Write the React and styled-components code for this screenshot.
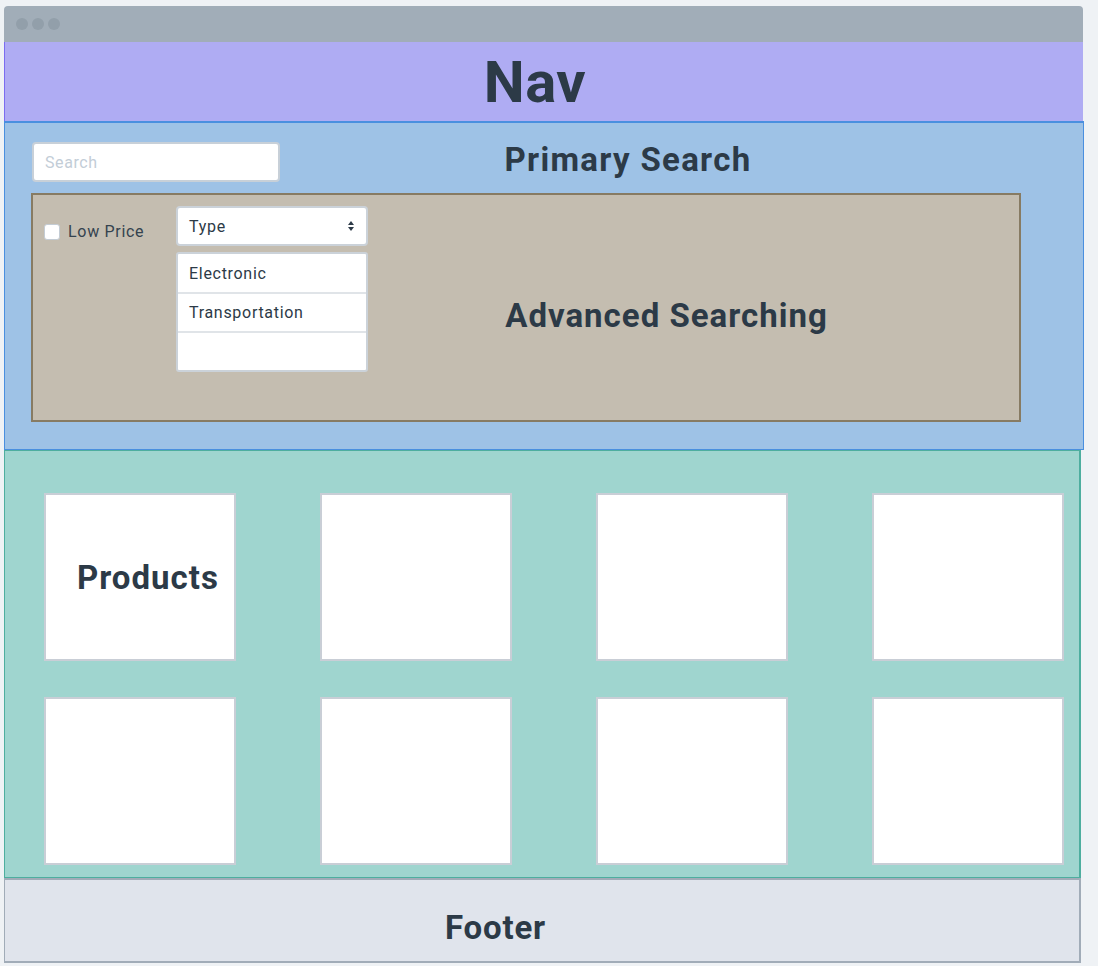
import React from "react";
import styled, { createGlobalStyle } from "styled-components";

const GlobalStyle = createGlobalStyle`
  html, body { margin: 0; padding: 0; }
  body {
    background: #eff2f5;
    font-family: Roboto, "Liberation Sans", sans-serif;
    color: #2c3a47;
  }
`;

const Window = styled.div`
  margin: 6px 0 0 4px;
  width: 1080px;
  display: flex;
  flex-direction: column;
`;

const TitleBar = styled.div`
  width: 1079px;
  height: 36px;
  background: #a1adb8;
  border-radius: 4px 4px 0 0;
  display: flex;
  align-items: center;
  gap: 4px;
  padding-left: 12px;
  box-sizing: border-box;
`;

const Dot = styled.span`
  width: 12px;
  height: 12px;
  border-radius: 50%;
  background: #929faa;
`;

const Heading = styled.h1`
  margin: 0;
  font-weight: 700;
  font-size: ${(p) => p.$size || 33}px;
  line-height: 1;
  color: #2c3a47;
  letter-spacing: ${(p) => (p.$ls !== undefined ? p.$ls : 1)}px;
`;

const Nav = styled.header`
  width: 1079px;
  height: 79px;
  box-sizing: border-box;
  background: #afacf3;
  border-left: 1px solid #7a6df0;
  display: flex;
  align-items: center;
  justify-content: center;
  padding: 0 18px 0 0;
`;

const SearchSection = styled.section`
  width: 1080px;
  height: 329px;
  box-sizing: border-box;
  background: #9ec2e6;
  border: 1px solid #4a8fdf;
  border-top-width: 2px;
  padding: 19px 0 0 27px;
  display: flex;
  flex-direction: column;
  gap: 11px;
`;

const TopRow = styled.div`
  display: grid;
  grid-template-columns: 248px 696px;
  align-items: center;
`;

const SearchInput = styled.input`
  height: 40px;
  box-sizing: border-box;
  border: 2px solid #c8d0d8;
  border-radius: 4px;
  background: #fff;
  padding: 0 11px;
  font-family: inherit;
  font-size: 16px;
  letter-spacing: 0.6px;
  outline: none;
  &::placeholder { color: #c3cdd7; }
`;

const CenteredTitle = styled.div`
  display: flex;
  justify-content: center;
  margin-top: -6px;
`;

const Advanced = styled.div`
  width: 990px;
  height: 229px;
  box-sizing: border-box;
  margin-left: -1px;
  background: #c4bdb0;
  border: 2px solid #877b63;
  padding: 11px 0 0 11px;
  display: flex;
  align-items: flex-start;
`;

const CheckLabel = styled.label`
  display: flex;
  align-items: center;
  gap: 8px;
  margin-top: 16px;
  font-size: 16px;
  letter-spacing: 0.7px;
  color: #34434f;
  width: 132px;
`;

const Box = styled.span`
  width: 16px;
  height: 16px;
  box-sizing: border-box;
  background: #fff;
  border: 1px solid #c4ccd4;
  border-radius: 3px;
`;

const SelectCol = styled.div`
  width: 192px;
  display: flex;
  flex-direction: column;
  gap: 6px;
`;

const Select = styled.div`
  height: 40px;
  box-sizing: border-box;
  background: #fff;
  border: 2px solid #cbd2d9;
  border-radius: 4px;
  display: flex;
  align-items: center;
  justify-content: space-between;
  padding: 0 11px;
  font-size: 16px;
  letter-spacing: 0.7px;
  color: #2c3a47;
`;

const List = styled.ul`
  margin: 0;
  padding: 0;
  list-style: none;
  background: #fff;
  border: 2px solid #cbd2d9;
  border-radius: 3px;
`;

const Option = styled.li`
  height: ${(p) => (p.$first ? 38 : 39)}px;
  box-sizing: border-box;
  display: flex;
  align-items: center;
  padding-left: 11px;
  font-size: 16px;
  letter-spacing: 0.7px;
  color: #2c3a47;
  border-top: ${(p) => (p.$first ? "none" : "2px solid #e0e4e8")};
`;

const AdvTitle = styled.div`
  flex: 1;
  display: flex;
  align-items: center;
  justify-content: center;
  padding: 4px 54px 0 0;
  box-sizing: border-box;
  height: 214px;
`;

const Products = styled.section`
  width: 1077px;
  height: 428px;
  box-sizing: border-box;
  background: #9fd5cf;
  border: 1px solid #4eae9f;
  border-right-width: 2px;
  padding: 42px 0 0 39px;
  display: grid;
  grid-template-columns: repeat(4, 192px);
  grid-auto-rows: 168px;
  column-gap: 84px;
  row-gap: 36px;
`;

const Card = styled.div`
  box-sizing: border-box;
  background: #fff;
  border: 2px solid #c9ced6;
  display: flex;
  align-items: center;
  padding-left: 31px;
`;

const Footer = styled.footer`
  width: 1077px;
  height: 85px;
  box-sizing: border-box;
  background: #e0e4ec;
  border: 2px solid #a1acb8;
  border-left-width: 1px;
  display: flex;
  align-items: center;
  justify-content: center;
  padding: 13px 93px 0 0;
`;

const Arrows = () => (
  <svg width="8" height="12" viewBox="0 0 8 12">
    <path d="M4 1 L7 5 L1 5 Z" fill="#2c3a47" />
    <path d="M4 11 L7 7 L1 7 Z" fill="#2c3a47" />
  </svg>
);

export default function App() {
  return (
    <>
      <GlobalStyle />
      <Window>
        <TitleBar>
          <Dot />
          <Dot />
          <Dot />
        </TitleBar>
        <Nav>
          <Heading $size={58} $ls={0.5}>Nav</Heading>
        </Nav>
        <SearchSection>
          <TopRow>
            <SearchInput placeholder="Search" />
            <CenteredTitle>
              <Heading $ls={1.3}>Primary Search</Heading>
            </CenteredTitle>
          </TopRow>
          <Advanced>
            <CheckLabel>
              <Box />
              Low Price
            </CheckLabel>
            <SelectCol>
              <Select>
                Type
                <Arrows />
              </Select>
              <List>
                <Option $first>Electronic</Option>
                <Option>Transportation</Option>
                <Option />
              </List>
            </SelectCol>
            <AdvTitle>
              <Heading>Advanced Searching</Heading>
            </AdvTitle>
          </Advanced>
        </SearchSection>
        <Products>
          <Card>
            <Heading>Products</Heading>
          </Card>
          <Card />
          <Card />
          <Card />
          <Card />
          <Card />
          <Card />
          <Card />
        </Products>
        <Footer>
          <Heading $ls={0.8}>Footer</Heading>
        </Footer>
      </Window>
    </>
  );
}
